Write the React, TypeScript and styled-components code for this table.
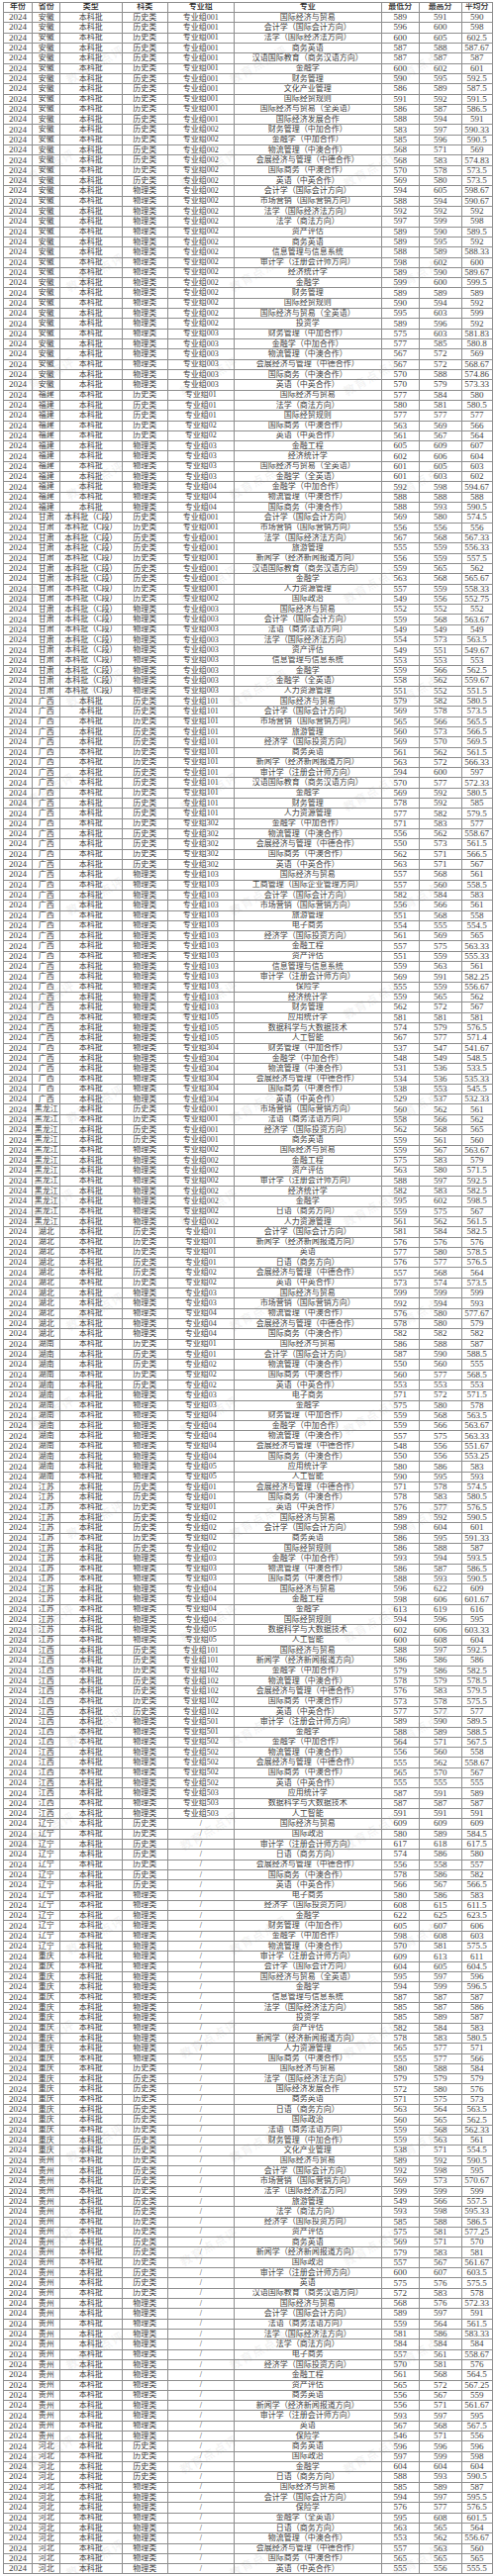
import { Fragment } from 'react';
import styled, { createGlobalStyle } from 'styled-components';

const GlobalStyle = createGlobalStyle`
  html, body {
    margin: 0;
    padding: 0;
    background: #ffffff;
  }
`;

const COLUMNS = '29.67px 27.67px 62.67px 46.33px 66.67px 149.33px 37.67px 43px 31px';

const RAW = `
# 安徽|本科批|历史类|专业组001
国际经济与贸易 589 591 590
会计学（国际会计方向） 596 600 598
法学（国际经济法方向） 600 605 602.5
商务英语 587 588 587.67
汉语国际教育（商务汉语方向） 587 587 587
金融学 600 602 601
财务管理 590 595 592.5
文化产业管理 586 589 587.5
国际经贸规则 591 592 591.5
国际经济与贸易（全英语） 586 587 586.5
国际经济发展合作 588 594 591
# 安徽|本科批|历史类|专业组002
财务管理（中加合作） 583 597 590.33
金融学（中加合作） 585 596 590.5
物流管理（中澳合作） 568 571 569
会展经济与管理（中德合作） 568 583 574.83
国际商务（中澳合作） 570 578 573.5
英语（中英合作） 569 580 573.5
# 安徽|本科批|物理类|专业组002
会计学（国际会计方向） 594 605 598.67
市场营销（国际营销方向） 588 594 590.67
法学（国际经济法方向） 592 592 592
法学（商法方向） 597 599 598
资产评估 589 590 589.5
商务英语 589 595 592
信息管理与信息系统 588 589 588.33
审计学（注册会计师方向） 598 602 600
经济统计学 589 590 589.67
金融学 599 600 599.5
财务管理 589 589 589
国际经贸规则 590 594 592
国际经济与贸易（全英语） 595 603 599
投资学 589 596 592
# 安徽|本科批|物理类|专业组003
财务管理（中加合作） 575 603 581.83
金融学（中加合作） 577 585 580.8
物流管理（中澳合作） 567 572 569
会展经济与管理（中德合作） 567 572 568.67
国际商务（中澳合作） 570 588 574.86
英语（中英合作） 570 579 573.33
# 福建|本科批|历史类|专业组01
国际经济与贸易 577 584 580
法学（商法方向） 580 581 580.5
国际经贸规则 577 577 577
# 福建|本科批|历史类|专业组02
国际商务（中澳合作） 563 569 566
英语（中英合作） 561 567 564
# 福建|本科批|物理类|专业组03
金融工程 605 609 607
经济统计学 602 606 604
国际经济与贸易（全英语） 601 605 603
金融学（全英语） 601 603 602
# 福建|本科批|物理类|专业组04
金融学（中加合作） 592 598 594.67
物流管理（中澳合作） 588 588 588
国际商务（中澳合作） 588 593 590.5
# 甘肃|本科批（C段）|历史类|专业组001
会计学（国际会计方向） 569 580 574.5
市场营销（国际营销方向） 556 556 556
法学（国际经济法方向） 567 568 567.33
旅游管理 555 559 556.33
新闻学（经济新闻报道方向） 556 559 557.5
汉语国际教育（商务汉语方向） 559 565 562
金融学 563 568 565.67
人力资源管理 557 559 558.33
# 甘肃|本科批（C段）|历史类|专业组002
国际政治 549 556 552.75
# 甘肃|本科批（C段）|物理类|专业组003
国际经济与贸易 552 552 552
会计学（国际会计方向） 559 568 563.67
法语（商务法语方向） 549 549 549
法学（国际经济法方向） 554 573 563.5
资产评估 549 551 549.67
信息管理与信息系统 553 553 553
金融学 559 566 562.5
金融学（全英语） 558 562 559.67
人力资源管理 551 552 551.5
# 广西|本科批|历史类|专业组101
国际经济与贸易 579 582 580.5
会计学（国际会计方向） 569 578 573.5
市场营销（国际营销方向） 565 566 565.5
旅游管理 560 573 566.5
经济学（国际投资方向） 569 570 569.5
商务英语 561 562 561.5
新闻学（经济新闻报道方向） 563 572 566.33
审计学（注册会计师方向） 594 600 597
汉语国际教育（商务汉语方向） 570 577 572.33
金融学 569 592 580.5
财务管理 578 592 585
人力资源管理 577 582 579.5
# 广西|本科批|历史类|专业组302
金融学（中加合作） 571 583 577
物流管理（中澳合作） 556 562 558.67
会展经济与管理（中德合作） 550 573 561.5
国际商务（中澳合作） 562 571 566.5
英语（中英合作） 563 571 567
# 广西|本科批|物理类|专业组103
国际经济与贸易 557 568 561
工商管理（国际企业管理方向） 557 560 558.5
会计学（国际会计方向） 582 584 583
市场营销（国际营销方向） 556 566 561
旅游管理 551 568 558
电子商务 554 555 554.5
经济学（国际投资方向） 561 569 565
金融工程 557 575 563.33
资产评估 551 559 555.33
信息管理与信息系统 559 563 561
审计学（注册会计师方向） 569 591 582.25
保险学 555 559 556.67
经济统计学 559 565 562
财务管理 562 572 567
# 广西|本科批|物理类|专业组105
应用统计学 581 581 581
数据科学与大数据技术 574 579 576.5
人工智能 567 577 571.4
# 广西|本科批|物理类|专业组304
财务管理（中加合作） 537 547 541.67
金融学（中加合作） 548 549 548.5
物流管理（中澳合作） 531 536 533.5
会展经济与管理（中德合作） 534 536 535.33
国际商务（中澳合作） 538 553 545.5
英语（中英合作） 529 537 532.33
# 黑龙江|本科批|历史类|专业组001
市场营销（国际营销方向） 560 562 561
法语（商务法语方向） 558 566 562
经济学（国际投资方向） 562 568 565
商务英语 559 561 560
# 黑龙江|本科批|物理类|专业组002
国际经济与贸易 559 567 563.67
金融工程 575 583 579
资产评估 563 580 571.5
审计学（注册会计师方向） 588 597 592.5
经济统计学 582 583 582.5
金融学 595 602 598.5
日语（商务方向） 559 575 567
人力资源管理 561 562 561.5
# 湖北|本科批|历史类|专业组01
会计学（国际会计方向） 581 584 582.5
新闻学（经济新闻报道方向） 576 576 576
英语 577 580 578.5
日语（商务方向） 576 577 576.5
# 湖北|本科批|历史类|专业组02
会展经济与管理（中德合作） 557 568 564
英语（中英合作） 573 574 573.5
# 湖北|本科批|物理类|专业组03
国际经济与贸易 599 599 599
市场营销（国际营销方向） 592 594 593
# 湖北|本科批|物理类|专业组04
物流管理（中澳合作） 576 580 577.67
会展经济与管理（中德合作） 578 580 579
国际商务（中澳合作） 582 582 582
# 湖南|本科批|历史类|专业组01
国际经济与贸易 586 588 587
会计学（国际会计方向） 587 590 588.5
# 湖南|本科批|历史类|专业组02
物流管理（中澳合作） 550 560 555
国际商务（中澳合作） 560 577 568.5
英语（中英合作） 553 553 553
# 湖南|本科批|物理类|专业组03
电子商务 571 572 571.5
金融学 575 580 578
# 湖南|本科批|物理类|专业组04
财务管理（中加合作） 559 568 563.5
金融学（中加合作） 559 566 563.67
物流管理（中澳合作） 557 575 563.33
会展经济与管理（中德合作） 548 556 551.67
国际商务（中澳合作） 550 556 553.25
# 湖南|本科批|物理类|专业组05
应用统计学 580 586 583
人工智能 590 595 593
# 江苏|本科批|历史类|专业组01
会展经济与管理（中德合作） 571 578 574.5
国际商务（中澳合作） 578 583 580.5
英语（中英合作） 576 577 576.5
# 江苏|本科批|历史类|专业组02
国际经济与贸易 589 592 590.5
会计学（国际会计方向） 598 604 601
商务英语 586 595 591.33
国际经贸规则 586 588 587
# 江苏|本科批|物理类|专业组03
金融学（中加合作） 593 594 593.5
物流管理（中澳合作） 586 587 586.5
国际商务（中澳合作） 588 593 590.5
# 江苏|本科批|物理类|专业组04
国际经济与贸易 596 622 609
金融工程 598 606 601.67
金融学 613 619 616
国际经贸规则 594 596 595
# 江苏|本科批|物理类|专业组05
数据科学与大数据技术 602 606 603.33
人工智能 600 608 604
# 江西|本科批|历史类|专业组101
国际经济与贸易 588 597 592.5
新闻学（经济新闻报道方向） 586 586 586
# 江西|本科批|历史类|专业组102
金融学（中加合作） 579 586 582.5
物流管理（中澳合作） 578 579 578.5
会展经济与管理（中德合作） 576 583 579.5
国际商务（中澳合作） 573 578 575.5
英语（中英合作） 577 577 577
# 江西|本科批|物理类|专业组501
审计学（注册会计师方向） 589 590 589.5
金融学 588 589 588.5
# 江西|本科批|物理类|专业组502
金融学（中加合作） 564 571 567.5
物流管理（中澳合作） 556 560 558
会展经济与管理（中德合作） 555 562 558.67
国际商务（中澳合作） 565 570 567
英语（中英合作） 555 555 555
# 江西|本科批|物理类|专业组503
应用统计学 587 591 589
数据科学与大数据技术 587 587 587
人工智能 591 591 591
# 辽宁|本科批|历史类|/
国际经济与贸易 609 609 609
国际政治 580 589 584.5
审计学（注册会计师方向） 617 618 617.5
日语（商务方向） 574 586 580
会展经济与管理（中德合作） 556 558 557
国际商务（中澳合作） 578 586 582
英语（中英合作） 566 567 566.5
# 辽宁|本科批|物理类|/
电子商务 580 586 583
经济学（国际投资方向） 608 615 611.5
金融学 622 625 623.5
财务管理（中加合作） 605 607 606
金融学（中加合作） 598 608 603
物流管理（中澳合作） 570 581 575.5
# 重庆|本科批|物理类|/
审计学（注册会计师方向） 609 613 611
会计学（国际会计方向） 604 605 604.5
国际经济与贸易（全英语） 595 597 596
金融学 594 599 596.5
信息管理与信息系统 587 587 587
法学（国际经济法方向） 585 587 586
投资学 585 589 587
资产评估 582 584 583
新闻学（经济新闻报道方向） 578 583 580.5
人力资源管理 565 577 571
国际商务（中澳合作） 555 577 566
# 重庆|本科批|历史类|/
国际经济与贸易 580 588 584
法学（国际经济法方向） 579 579 579
国际经济发展合作 572 580 576
商务英语 571 575 573
日语（商务方向） 563 564 563.5
国际政治 560 565 562.5
法语（商务法语方向） 559 568 562.33
财务管理（中加合作） 559 563 561
文化产业管理 538 571 554.5
# 贵州|本科批|历史类|/
国际经济与贸易 589 592 590.5
会计学（国际会计方向） 592 598 595
市场营销（国际营销方向） 569 573 570.67
法学（国际经济法方向） 599 599 599
旅游管理 549 566 557.5
法学（商法方向） 593 598 595.33
经济学（国际投资方向） 585 588 586.5
资产评估 575 581 577.25
商务英语 569 571 570
新闻学（经济新闻报道方向） 579 583 581
国际政治 557 567 561.67
审计学（注册会计师方向） 600 607 603.5
英语 575 576 575.5
汉语国际教育（商务汉语方向） 572 583 578
# 贵州|本科批|物理类|/
国际经济与贸易 568 576 572.33
会计学（国际会计方向） 589 597 591
法语（商务法语方向） 559 564 561.5
法学（国际经济法方向） 581 586 583.33
法学（商法方向） 584 584 584
电子商务 557 561 558.67
经济学（国际投资方向） 570 581 576
金融工程 561 568 564.5
资产评估 565 572 567.25
商务英语 556 567 559
新闻学（经济新闻报道方向） 556 571 561.67
审计学（注册会计师方向） 593 597 595
英语 567 568 567.5
保险学 546 571 556
# 河北|本科批|历史类|/
商务英语 596 596 596
国际政治 597 599 598
金融学 604 604 604
日语（商务方向） 588 593 590.5
# 河北|本科批|物理类|/
国际经济与贸易 585 589 587
会计学（国际会计方向） 594 597 595.5
保险学 576 577 576.5
金融学（全英语） 595 608 601.5
日语（商务方向） 563 565 564
物流管理（中澳合作） 553 562 556.67
会展经济与管理（中德合作） 557 563 560
国际商务（中澳合作） 565 565 565
英语（中英合作） 555 556 555.5
`;

interface ScoreRow {
  province: string;
  batch: string;
  subject: string;
  group: string;
  major: string;
  min: string;
  max: string;
  avg: string;
}

function parseRows(raw: string): ScoreRow[] {
  const rows: ScoreRow[] = [];
  let head = ['', '', '', ''];
  raw
    .split('\n')
    .map((l) => l.trim())
    .filter(Boolean)
    .forEach((line) => {
      if (line.startsWith('#')) {
        head = line.slice(1).trim().split('|');
        return;
      }
      const [major, min, max, avg] = line.split(' ');
      rows.push({
        province: head[0],
        batch: head[1],
        subject: head[2],
        group: head[3],
        major,
        min,
        max,
        avg,
      });
    });
  return rows;
}

const rows = parseRows(RAW);

const Page = styled.main`
  padding: 1.7px 0 0 2.7px;
`;

const Frame = styled.div`
  position: relative;
  width: max-content;
`;

const Sheet = styled.div`
  display: grid;
  grid-template-columns: ${COLUMNS};
  grid-auto-rows: 10.313px;
  width: max-content;
  border-left: 1px solid #8e8e8e;
  border-top: 1px solid #8e8e8e;
  color: #3d3d3d;
  font-family: 'Liberation Serif', 'Noto Sans CJK SC', serif;
`;

const Cell = styled.div<{ $num?: boolean; $head?: boolean }>`
  box-sizing: border-box;
  display: flex;
  align-items: center;
  justify-content: center;
  overflow: hidden;
  white-space: nowrap;
  border-right: 1px solid #8e8e8e;
  border-bottom: 1px solid #8e8e8e;
  font-size: ${(p) => (p.$num ? '9px' : '8px')};
  line-height: 1;
  color: ${(p) => (p.$head ? '#222222' : 'inherit')};
  font-weight: ${(p) => (p.$head ? 500 : 400)};
`;

/* faint diagonal watermark laid over the sheet */
const Watermarks = styled.div`
  position: absolute;
  inset: 0;
  overflow: hidden;
  pointer-events: none;
  display: grid;
  grid-template-columns: repeat(3, 1fr);
  grid-auto-rows: 105px;
  padding-top: 10px;
`;

const Mark = styled.span<{ $shift?: boolean }>`
  align-self: center;
  justify-self: center;
  transform: translateX(${(p) => (p.$shift ? '-40px' : '10px')}) rotate(-30deg);
  font-family: 'Noto Sans CJK SC', sans-serif;
  font-size: 12px;
  font-weight: 700;
  letter-spacing: 1px;
  color: rgba(120, 120, 120, 0.09);
  white-space: nowrap;
`;

const HEADERS = ['年份', '省份', '类型', '科类', '专业组', '专业', '最低分', '最高分', '平均分'];

const MARK_COUNT = 75;

export default function App() {
  return (
    <Page>
      <GlobalStyle />
      <Frame>
        <Sheet role="table">
          {HEADERS.map((h) => (
            <Cell key={h} $head role="columnheader">
              {h}
            </Cell>
          ))}
          {rows.map((r, i) => (
            <Fragment key={i}>
              <Cell $num>2024</Cell>
              <Cell>{r.province}</Cell>
              <Cell>{r.batch}</Cell>
              <Cell>{r.subject}</Cell>
              <Cell>{r.group}</Cell>
              <Cell>{r.major}</Cell>
              <Cell $num>{r.min}</Cell>
              <Cell $num>{r.max}</Cell>
              <Cell $num>{r.avg}</Cell>
            </Fragment>
          ))}
        </Sheet>
        <Watermarks aria-hidden>
          {Array.from({ length: MARK_COUNT }, (_, i) => (
            <Mark key={i} $shift={Math.floor(i / 3) % 2 === 1}>
              教育点点评
            </Mark>
          ))}
        </Watermarks>
      </Frame>
    </Page>
  );
}
